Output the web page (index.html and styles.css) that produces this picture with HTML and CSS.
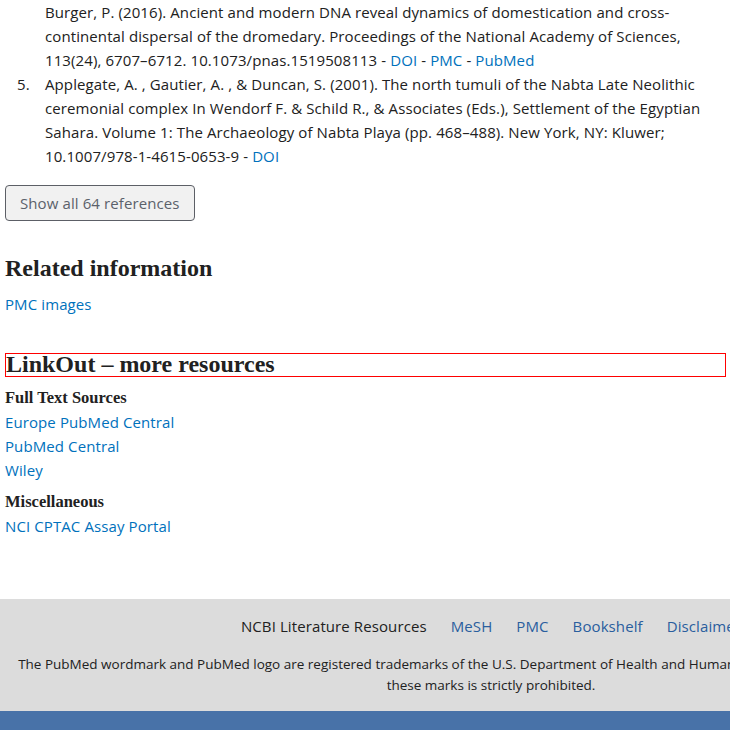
FILE: index.html
```html
<!DOCTYPE html>
<html lang="en">
<head>
<meta charset="utf-8">
<title>PubMed</title>
<link rel="stylesheet" href="styles.css">
</head>
<body>
<main class="page">
  <section class="refs">
    <ol class="ref-list" start="4">
      <li class="ref cont">Burger, P. (2016). Ancient and modern DNA reveal dynamics of domestication and cross-continental dispersal of the dromedary. Proceedings of the National Academy of Sciences, 113(24), 6707–6712. 10.1073/pnas.1519508113 - <a href="#">DOI</a> - <a href="#">PMC</a> - <a href="#">PubMed</a></li>
      <li class="ref">Applegate, A. , Gautier, A. , &amp; Duncan, S. (2001). The north tumuli of the Nabta Late Neolithic ceremonial complex In Wendorf F. &amp; Schild R., &amp; Associates (Eds.), Settlement of the Egyptian Sahara. Volume 1: The Archaeology of Nabta Playa (pp. 468–488). New York, NY: Kluwer; 10.1007/978-1-4615-0653-9 - <a href="#">DOI</a></li>
    </ol>
    <button class="show-all" type="button">Show all 64 references</button>
  </section>

  <section class="related">
    <h2 class="sec-title">Related information</h2>
    <a class="block-link" href="#">PMC images</a>
  </section>

  <section class="linkout">
    <h2 class="sec-title boxed">LinkOut – more resources</h2>
    <h3 class="sub-title">Full Text Sources</h3>
    <a class="block-link" href="#">Europe PubMed Central</a>
    <a class="block-link" href="#">PubMed Central</a>
    <a class="block-link" href="#">Wiley</a>
    <h3 class="sub-title misc">Miscellaneous</h3>
    <a class="block-link" href="#">NCI CPTAC Assay Portal</a>
  </section>
</main>

<footer class="footer">
  <div class="footer-inner">
    <nav class="footer-nav">
      <span class="footer-label">NCBI Literature Resources</span>
      <a href="#">MeSH</a>
      <a href="#">PMC</a>
      <a href="#">Bookshelf</a>
      <a href="#">Disclaimer</a>
    </nav>
    <p class="footer-note">The PubMed wordmark and PubMed logo are registered trademarks of the U.S. Department of Health and Human Services (HHS). Unauthorized use of these marks is strictly prohibited.</p>
  </div>
  <div class="footer-bar"></div>
</footer>
</body>
</html>
```

FILE: styles.css
```css
html, body {
  margin: 0;
  padding: 0;
  overflow-x: hidden;
  background: #ffffff;
}

body {
  font-family: "Open Sans", "Liberation Sans", sans-serif;
  font-size: 15px;
  line-height: 24px;
  letter-spacing: 0.1px;
  color: #212121;
  width: 982px;
}

a {
  color: #0071bc;
  text-decoration: none;
}

.page {
  width: 721px;
  margin: 0 0 0 5px;
  padding-bottom: 61px;
}

.ref-list {
  margin: 0 0 17px 0;
  padding-left: 40px;
}

.ref::marker {
  content: counter(list-item) ".\2002\2002";
}

.ref.cont {
  list-style: none;
}

.ref.cont::marker {
  content: none;
}

.show-all {
  display: block;
  white-space: nowrap;
  font-family: "Open Sans", "Liberation Sans", sans-serif;
  font-size: 15px;
  line-height: 24px;
  letter-spacing: 0.1px;
  color: #5b616b;
  background: #f1f1f1;
  border: 1px solid #5c5f66;
  border-radius: 4px;
  padding: 5px 14px;
  margin: 0;
}

.sec-title {
  font-family: "Liberation Serif", "DejaVu Serif", serif;
  font-weight: bold;
  font-size: 24px;
  line-height: 22px;
  letter-spacing: 0;
  color: #212121;
  margin: 0;
}

.related {
  padding-top: 36px;
}

.related .sec-title {
  margin-bottom: 13px;
}

.block-link {
  display: block;
}

.linkout {
  padding-top: 37px;
}

.sec-title.boxed {
  border: 1px solid #ff0000;
  line-height: 20px;
  padding-bottom: 2px;
  margin-bottom: 9px;
}

.sub-title {
  font-family: "Liberation Serif", "DejaVu Serif", serif;
  font-weight: bold;
  font-size: 16.5px;
  line-height: 24px;
  letter-spacing: 0;
  margin: 0;
  color: #212121;
}

.sub-title.misc {
  margin-top: 8px;
}

.footer {
  background: #dcdcdc;
}

.footer-inner {
  padding: 15px 16px 15px;
  text-align: center;
}

.footer-nav {
  display: flex;
  justify-content: center;
  gap: 24px;
  line-height: 24px;
}

.footer-label {
  color: #212121;
}

.footer-nav a {
  color: #2a5e9e;
}

.footer-note {
  margin: 16px 0 0;
  font-size: 13.5px;
  line-height: 21px;
  letter-spacing: 0;
  color: #212121;
}

.footer-bar {
  height: 40px;
  background: #4872a8;
}
```
